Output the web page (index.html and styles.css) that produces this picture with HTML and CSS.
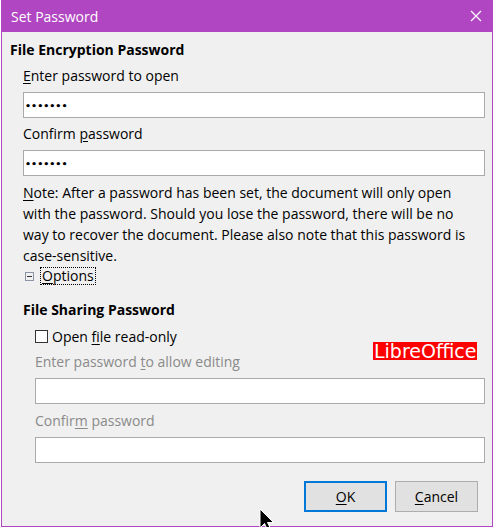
FILE: index.html
```html
<!DOCTYPE html>
<html>
<head>
<meta charset="utf-8">
<link rel="stylesheet" href="styles.css">
</head>
<body>
<div class="window">
  <div class="titlebar">
    <span class="title">Set Password</span>
    <svg class="close" width="12" height="12" viewBox="0 0 12 12"><path d="M1 1L11 11M11 1L1 11" stroke="#fff" stroke-width="1.2" fill="none"/></svg>
  </div>
  <div class="content">
    <div class="heading">File Encryption Password</div>
    <div class="group">
      <div class="label"><u>E</u>nter password to open</div>
      <div class="input"><span class="dots">•••••••</span></div>
      <div class="label"><span>Confirm </span><u>p</u>assword</div>
      <div class="input"><span class="dots">•••••••</span></div>
      <p class="note"><span class="mn">N</span>ote: After a password has been set, the document will only open with the password. Should you lose the password, there will be no way to recover the document. Please also note that this password is case-sensitive.</p>
      <div class="expander">
        <span class="exp-icon"></span>
        <span class="exp-label"><u>O</u>ptions</span>
      </div>
      <div class="heading sub">File Sharing Password</div>
      <div class="sharing">
        <div class="check-row"><span class="checkbox"></span><span>Open <u>f</u>ile read-only</span></div>
        <div class="label disabled">Enter password <u>t</u>o allow editing</div>
        <div class="input"></div>
        <div class="label disabled last">Confir<u>m</u> password</div>
        <div class="input"></div>
      </div>
    </div>
    <div class="buttons">
      <div class="btn default"><u>O</u>K</div>
      <div class="btn"><u>C</u>ancel</div>
    </div>
    <div class="brand">LibreOffice</div>
    <svg class="cursor" width="20" height="26" viewBox="0 0 20 26"><path d="M1 1L1 20L5.5 15.5L9 23L12 21.5L8.5 14.5L14.5 14.5Z" fill="#000" stroke="#fff" stroke-width="1"/></svg>
  </div>
</div>
</body>
</html>
```
FILE: styles.css
```css
html, body {
  margin: 0;
  padding: 0;
  background: #ffffff;
}
body {
  font-family: "Open Sans", "Noto Sans", sans-serif;
  font-size: 14px;
  color: #000;
}
u {
  text-decoration: underline;
  text-underline-offset: 2px;
}
.mn {
  text-decoration: underline;
  text-underline-offset: 2px;
}
.window {
  position: relative;
  margin-left: 1px;
  width: 492px;
  height: 527px;
  box-sizing: border-box;
  border: 1px solid #b146c2;
  border-top: none;
  background: #f0f0f0;
  display: flex;
  flex-direction: column;
}
.titlebar {
  height: 32px;
  margin: 0 -1px;
  background: #b146c2;
  display: flex;
  align-items: center;
  justify-content: space-between;
  padding: 0 10px 0 10px;
  flex-shrink: 0;
}
.title {
  color: #fff;
  font-size: 14px;
  font-weight: 400;
}
.close {
  margin-right: 1px;
}
.content {
  position: relative;
  flex: 1;
  padding: 8px 7px 0 8px;
  display: flex;
  flex-direction: column;
}
.heading {
  font-weight: 700;
  line-height: 20px;
  height: 20px;
}
.heading.sub {
  margin-top: 14px;
}
.group {
  padding-left: 13px;
  display: flex;
  flex-direction: column;
}
.label {
  line-height: 20px;
  margin-top: 6px;
}
.label.disabled {
  color: #8a8a8a;
}
.label.last {
  margin-top: 7px;
}
.input {
  height: 26px;
  box-sizing: border-box;
  border: 1px solid #a9a9a9;
  background: #fff;
  margin-top: 6px;
  display: flex;
  align-items: center;
  padding-left: 1px;
}
.dots {
  font-size: 9.5px;
  letter-spacing: 0;
  font-family: "DejaVu Sans", sans-serif;
  font-weight: 700;
}
.note {
  margin: 6px 0 0 0;
  line-height: 21px;
  max-width: 452px;
}
.expander {
  display: flex;
  align-items: center;
  height: 20px;
}
.exp-icon {
  width: 7px;
  height: 7px;
  border: 1px solid #8a96a8;
  position: relative;
  margin-left: 2px;
  margin-right: 6px;
}
.exp-icon::after {
  content: "";
  position: absolute;
  left: 1px;
  right: 1px;
  top: 3px;
  height: 1px;
  background: #333;
}
.exp-label {
  border: 1px dotted #000;
  padding: 0 1px;
  line-height: 16px;
}
.sharing {
  padding-left: 12px;
  display: flex;
  flex-direction: column;
}
.check-row {
  display: flex;
  align-items: center;
  height: 20px;
  margin-top: 6px;
}
.checkbox {
  width: 11px;
  height: 11px;
  border: 1px solid #333;
  background: #fff;
  margin-right: 4px;
}
.buttons {
  display: flex;
  justify-content: flex-end;
  gap: 8px;
  margin-top: 18px;
  padding-right: 7px;
}
.btn {
  width: 83px;
  height: 31px;
  box-sizing: border-box;
  border: 1px solid #adadad;
  background: #e1e1e1;
  display: flex;
  align-items: center;
  justify-content: center;
}
.btn.default {
  border: 2px solid #0078d7;
}
.brand {
  position: absolute;
  left: 371px;
  top: 310px;
  background: #ff0000;
  color: #fff;
  font-family: "DejaVu Sans", sans-serif;
  font-size: 19px;
  line-height: 18px;
  padding: 0 1px;
}
.cursor {
  position: absolute;
  left: 257px;
  top: 476px;
}
```
